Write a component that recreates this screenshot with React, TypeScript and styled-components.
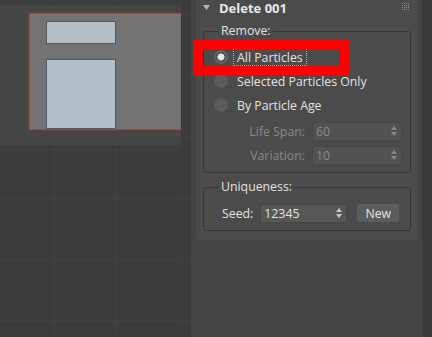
import styled, { createGlobalStyle } from 'styled-components';

const GlobalStyle = createGlobalStyle`
  html, body {
    margin: 0;
    padding: 0;
    background: #444444;
  }
  body {
    font-family: "Open Sans", "Noto Sans", sans-serif;
    font-size: 12.3px;
    color: #e2e2e2;
  }
  * { box-sizing: border-box; }
`;

const Screen = styled.div`
  width: 432px;
  height: 337px;
  display: flex;
  overflow: hidden;
  background: #444444;
`;

const Viewport = styled.div`
  position: relative;
  width: 191px;
  height: 100%;
  overflow: hidden;
  background-color: #3c3c3c;
  background-image:
    linear-gradient(to right, #424242 1px, transparent 1px),
    linear-gradient(to bottom, #424242 1px, transparent 1px);
  background-size: 62px 61px;
  background-position: 54px 15px;
`;

const SafeFrame = styled.div`
  position: absolute;
  left: 0;
  top: 5px;
  width: 181px;
  height: 140px;
  background: #454545;
  overflow: hidden;
`;

const Plane = styled.div`
  position: absolute;
  left: 29px;
  top: 8px;
  width: 220px;
  height: 117px;
  background: #737373;
  border: 1px solid #dc2a2e;
  box-shadow: 0 0 1.5px rgba(230, 40, 40, 1);
`;

const Particle = styled.div<{ $top: number; $height: number }>`
  position: absolute;
  left: 16px;
  top: ${(p) => p.$top}px;
  width: 70px;
  height: ${(p) => p.$height}px;
  background: #b4bec6;
  border: 1px solid #4e5a68;
`;

const Sidebar = styled.div`
  position: relative;
  flex: 1;
  display: flex;
  padding-left: 5px;
`;

const Highlight = styled.div`
  position: absolute;
  left: 2px;
  top: 40px;
  width: 156px;
  height: 35px;
  border-style: solid;
  border-color: #ff0000;
  border-width: 9px 10px;
  pointer-events: none;
`;

const Rollout = styled.div`
  width: 222px;
  align-self: flex-start;
  background: #4b4b4b;
  border-radius: 0 0 3px 3px;
  padding: 0 7px 9px;
`;

const RolloutHeader = styled.div`
  height: 16px;
  display: flex;
  align-items: center;
  font-weight: 700;
  font-size: 13px;
  line-height: 16px;
  color: #e8e8e8;
  margin-bottom: 7px;
`;

const Caret = styled.svg`
  width: 7px;
  height: 5px;
  margin-right: 9px;
  margin-top: -1px;
`;

const Grip = styled.svg`
  margin-left: auto;
  margin-right: 2px;
  margin-top: -4px;
  width: 7px;
  height: 7px;
`;

const Scrollbar = styled.div`
  width: 10px;
  margin-left: 4px;
  height: 100%;
  background: #3a3a3a;
`;

const Group = styled.fieldset<{ $gap?: number }>`
  margin: ${(p) => p.$gap ?? 0}px 0 0;
  padding: 6px 8px 5px 10px;
  border: 1px solid #363636;
  border-radius: 3px;
  min-width: 0;
`;

const Legend = styled.legend`
  padding: 0 2px;
  margin-left: 5px;
  line-height: 16px;
  color: #e2e2e2;
`;

const RadioRow = styled.div`
  height: 24px;
  display: flex;
  align-items: center;
`;

const RadioDot = styled.span<{ $checked?: boolean }>`
  width: 14px;
  height: 14px;
  border-radius: 50%;
  flex-shrink: 0;
  background: ${(p) =>
    p.$checked
      ? 'radial-gradient(circle, #e6e6e6 0 3.2px, #4f4f4f 3.8px 4.4px, #626262 5px)'
      : '#5a5a5a'};
`;

const RadioLabel = styled.span<{ $focused?: boolean }>`
  margin-left: 5px;
  height: 18px;
  padding: 0 3px;
  display: flex;
  align-items: center;
  border: 1px dotted ${(p) => (p.$focused ? '#a8a8a8' : 'transparent')};
  color: #e2e2e2;
`;

const SpinnerBlock = styled.div`
  margin-top: 2px;
`;

const SpinnerRow = styled.div`
  height: 24px;
  display: flex;
  align-items: center;
  justify-content: flex-end;
`;

const FieldLabel = styled.span<{ $disabled?: boolean }>`
  margin-right: 7px;
  color: ${(p) => (p.$disabled ? '#8a8a8a' : '#e2e2e2')};
`;

const SpinField = styled.div<{ $width: number; $disabled?: boolean }>`
  width: ${(p) => p.$width}px;
  height: 19px;
  display: flex;
  align-items: center;
  padding: 0 4px 0 3px;
  background: ${(p) => (p.$disabled ? '#525252' : '#575757')};
  border: 1px solid #464646;
  color: ${(p) => (p.$disabled ? '#8a8a8a' : '#e4e4e4')};
  span {
    flex: 1;
  }
`;

const Arrows = styled.svg`
  width: 6px;
  height: 10px;
`;

const SeedRow = styled.div`
  height: 24px;
  display: flex;
  align-items: center;
  padding-left: 8px;
`;

const Button = styled.button`
  margin-left: 10px;
  width: 42px;
  height: 18px;
  padding: 0;
  border: none;
  border-radius: 3px;
  background: #5d5d5d;
  color: #e2e2e2;
  font: inherit;
`;

function SpinArrows({ color }: { color: string }) {
  return (
    <Arrows viewBox="0 0 6 10">
      <polygon points="0,4 3,0 6,4" fill={color} />
      <polygon points="0,6 6,6 3,10" fill={color} />
    </Arrows>
  );
}

function Spinner({ value, width, disabled }: { value: string; width: number; disabled?: boolean }) {
  return (
    <SpinField $width={width} $disabled={disabled}>
      <span>{value}</span>
      <SpinArrows color={disabled ? '#858585' : '#c8c8c8'} />
    </SpinField>
  );
}

const dots = [0, 2, 4, 6];

export default function App() {
  return (
    <>
      <GlobalStyle />
      <Screen>
        <Viewport>
          <SafeFrame>
            <Plane>
              <Particle $top={7} $height={23} />
              <Particle $top={45} $height={70} />
            </Plane>
          </SafeFrame>
        </Viewport>
        <Sidebar>
          <Rollout>
            <RolloutHeader>
              <Caret viewBox="0 0 7 5">
                <polygon points="0,0 7,0 3.5,5" fill="#b4b4b4" />
              </Caret>
              Delete 001
              <Grip viewBox="0 0 7 7">
                {dots.map((y) =>
                  dots.map((x) => <rect key={`${x}-${y}`} x={x} y={y} width="1" height="1" fill="#8e8e8e" />)
                )}
              </Grip>
            </RolloutHeader>

            <Group>
              <Legend>Remove:</Legend>
              <RadioRow>
                <RadioDot $checked />
                <RadioLabel $focused>All Particles</RadioLabel>
              </RadioRow>
              <RadioRow>
                <RadioDot />
                <RadioLabel>Selected Particles Only</RadioLabel>
              </RadioRow>
              <RadioRow>
                <RadioDot />
                <RadioLabel>By Particle Age</RadioLabel>
              </RadioRow>
              <SpinnerBlock>
                <SpinnerRow>
                  <FieldLabel $disabled>Life Span:</FieldLabel>
                  <Spinner value="60" width={90} disabled />
                </SpinnerRow>
                <SpinnerRow>
                  <FieldLabel $disabled>Variation:</FieldLabel>
                  <Spinner value="10" width={90} disabled />
                </SpinnerRow>
              </SpinnerBlock>
            </Group>

            <Group $gap={6}>
              <Legend>Uniqueness:</Legend>
              <SeedRow>
                <FieldLabel>Seed:</FieldLabel>
                <Spinner value="12345" width={87} />
                <Button>New</Button>
              </SeedRow>
            </Group>
          </Rollout>
          <Scrollbar />
          <Highlight />
        </Sidebar>
      </Screen>
    </>
  );
}
